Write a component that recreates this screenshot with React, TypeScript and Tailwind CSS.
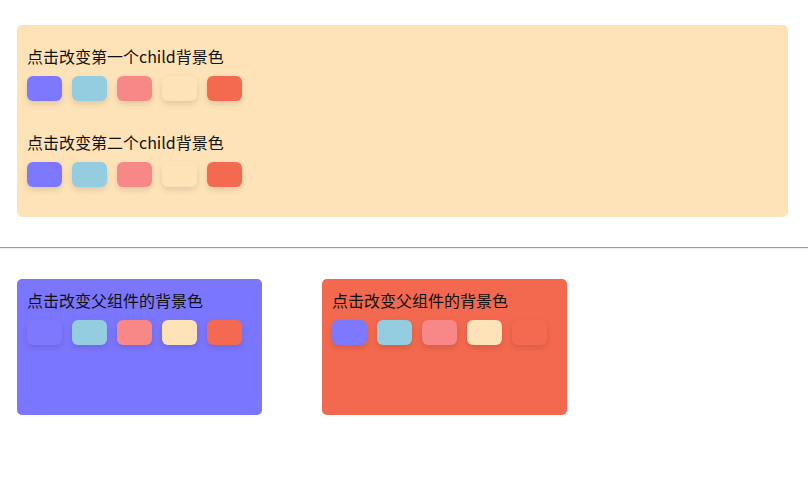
import React from 'react';

const colors = ['#7d78ff', '#94cde0', '#f78887', '#ffe3b8', '#f36a50'];

function Swatches() {
  return (
    <div className="flex gap-[10px]">
      {colors.map((c) => (
        <div
          key={c}
          className="w-[35px] h-[25px] rounded-[6px] shadow-[0_3px_6px_rgba(0,0,0,0.12)]"
          style={{ backgroundColor: c }}
        />
      ))}
    </div>
  );
}

function Group({ label }: { label: string }) {
  return (
    <div className="flex flex-col gap-[8px]">
      <div className="text-[16px] leading-[24px] text-[#111]">{label}</div>
      <Swatches />
    </div>
  );
}

export default function App() {
  return (
    <div
      className="w-[808px] h-[482px] bg-white"
      style={{ fontFamily: '"Microsoft YaHei", "Noto Sans CJK SC", sans-serif' }}
    >
      <div className="pt-[25px] pl-[17px] pr-[20px]">
        <div className="bg-[#ffe3b8] rounded-[5px] px-[10px] pt-[19px] pb-[30px] flex flex-col gap-[29px]">
          <Group label="点击改变第一个child背景色" />
          <Group label="点击改变第二个child背景色" />
        </div>
      </div>

      <div className="mt-[30px] border-t border-[#9b9b9b] border-b border-b-[#eeeeee]" />

      <div className="flex gap-[60px] pl-[17px] pt-[30px]">
        <div className="w-[245px] h-[136px] rounded-[5px] bg-[#7b76ff] px-[10px] pt-[9px]">
          <Group label="点击改变父组件的背景色" />
        </div>
        <div className="w-[245px] h-[136px] rounded-[5px] bg-[#f3694f] px-[10px] pt-[9px]">
          <Group label="点击改变父组件的背景色" />
        </div>
      </div>
    </div>
  );
}
